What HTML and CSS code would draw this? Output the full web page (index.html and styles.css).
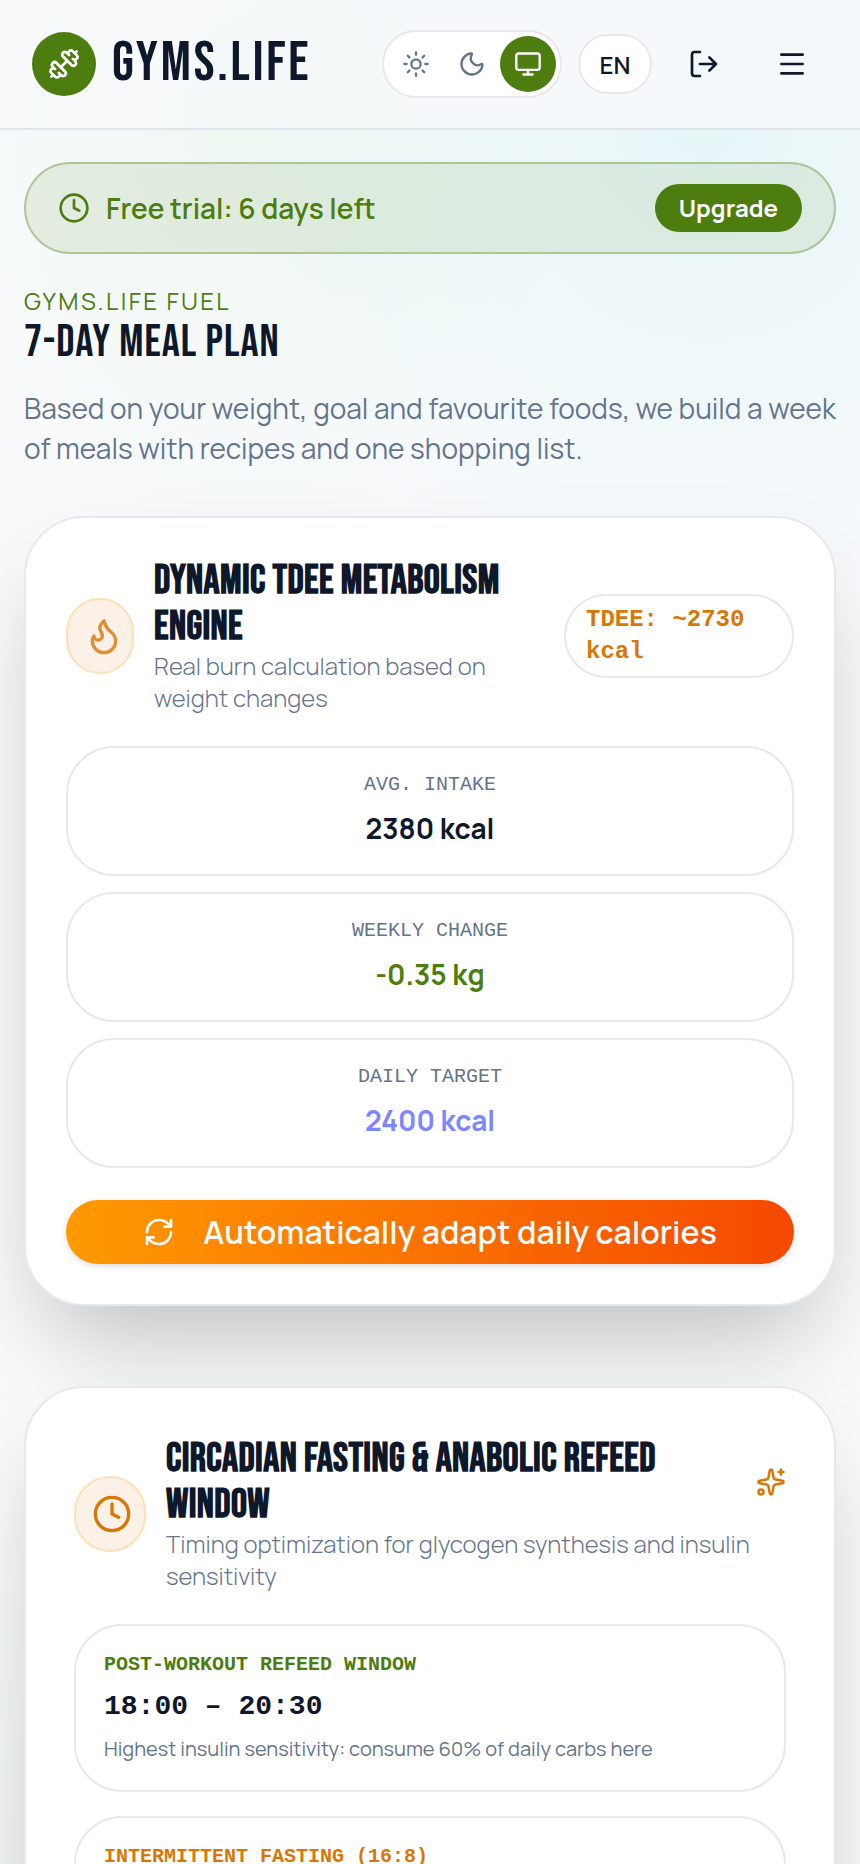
FILE: index.html
```html
<!DOCTYPE html>
<html lang="en">
<head>
    <meta charset="UTF-8">
    <meta name="viewport" content="width=device-width, initial-scale=1.0">
    <title>GYMS.LIFE - 7-day meal plan</title>
    <link rel="stylesheet" href="styles.css">
</head>
<body>
    <div class="app">
        <header class="topbar">
            <a class="brand" href="#">
                <span class="brand-mark">
                    <svg class="icon icon-md" viewBox="0 0 24 24" aria-hidden="true">
                        <path d="M17.596 12.768a2 2 0 1 0 2.829-2.829l-1.768-1.767a2 2 0 0 0 2.828-2.829l-2.828-2.828a2 2 0 0 0-2.829 2.828l-1.767-1.768a2 2 0 1 0-2.829 2.829z"/>
                        <path d="m2.5 21.5 1.4-1.4"/>
                        <path d="m20.1 3.9 1.4-1.4"/>
                        <path d="M5.343 21.485a2 2 0 1 0 2.829-2.828l1.767 1.768a2 2 0 1 0 2.829-2.829l-6.364-6.364a2 2 0 1 0-2.829 2.829l1.768 1.767a2 2 0 0 0-2.828 2.829z"/>
                        <path d="m9.6 14.4 4.8-4.8"/>
                    </svg>
                </span>
                <span class="brand-name">GYMS.LIFE</span>
            </a>

            <div class="actions">
                <div class="theme-switch">
                    <button type="button" aria-label="Light theme">
                        <svg class="icon icon-sm" viewBox="0 0 24 24">
                            <circle cx="12" cy="12" r="4"/>
                            <path d="M12 2v2M12 20v2M4.93 4.93l1.41 1.41M17.66 17.66l1.41 1.41M2 12h2M20 12h2M6.34 17.66l-1.41 1.41M19.07 4.93l-1.41 1.41"/>
                        </svg>
                    </button>
                    <button type="button" aria-label="Dark theme">
                        <svg class="icon icon-sm" viewBox="0 0 24 24">
                            <path d="M20.985 12.486a9 9 0 1 1-9.473-9.472c.405-.022.617.46.402.803a6 6 0 0 0 8.268 8.268c.344-.215.825-.004.803.401"/>
                        </svg>
                    </button>
                    <button type="button" class="active" aria-label="System theme">
                        <svg class="icon icon-sm" viewBox="0 0 24 24">
                            <rect width="20" height="14" x="2" y="3" rx="2"/>
                            <path d="M8 21h8M12 17v4"/>
                        </svg>
                    </button>
                </div>
                <button type="button" class="lang">EN</button>
                <button type="button" class="icon-button" aria-label="Log out">
                    <svg class="icon icon-md" viewBox="0 0 24 24">
                        <path d="m16 17 5-5-5-5M21 12H9M9 21H5a2 2 0 0 1-2-2V5a2 2 0 0 1 2-2h4"/>
                    </svg>
                </button>
                <button type="button" class="icon-button" aria-label="Menu">
                    <svg class="icon icon-md" viewBox="0 0 24 24">
                        <path d="M4 5h16M4 12h16M4 19h16"/>
                    </svg>
                </button>
            </div>
        </header>

        <main>
            <div class="trial">
                <svg class="icon icon-md" viewBox="0 0 24 24" aria-hidden="true">
                    <circle cx="12" cy="12" r="10"/>
                    <path d="M12 6v6l4 2"/>
                </svg>
                <span class="trial-text">Free trial: 6 days left</span>
                <a class="upgrade" href="#">Upgrade</a>
            </div>

            <section class="intro">
                <p class="eyebrow">GYMS.LIFE FUEL</p>
                <h1>7-DAY MEAL PLAN</h1>
                <p class="lead">Based on your weight, goal and favourite foods, we build a week of meals with recipes and one shopping list.</p>
            </section>

            <section class="card">
                <div class="card-head">
                    <span class="badge badge-flame">
                        <svg class="icon icon-lg" viewBox="0 0 24 24" aria-hidden="true">
                            <path d="M12 3q1 4 4 6.5t3 5.5a1 1 0 0 1-14 0 5 5 0 0 1 1-3 1 1 0 0 0 5 0c0-2-1.5-3-1.5-5q0-2 2.5-4"/>
                        </svg>
                    </span>
                    <div class="card-title">
                        <h2>DYNAMIC TDEE METABOLISM ENGINE</h2>
                        <p>Real burn calculation based on weight changes</p>
                    </div>
                    <span class="tdee">TDEE: ~2730 kcal</span>
                </div>

                <div class="stats">
                    <div class="stat">
                        <span class="stat-label">AVG. INTAKE</span>
                        <strong>2380 kcal</strong>
                    </div>
                    <div class="stat">
                        <span class="stat-label">WEEKLY CHANGE</span>
                        <strong class="green">-0.35 kg</strong>
                    </div>
                    <div class="stat">
                        <span class="stat-label">DAILY TARGET</span>
                        <strong class="indigo">2400 kcal</strong>
                    </div>
                </div>

                <button type="button" class="adapt">
                    <svg class="icon icon-md" viewBox="0 0 24 24" aria-hidden="true">
                        <path d="M3 12a9 9 0 0 1 9-9 9.75 9.75 0 0 1 6.74 2.74L21 8"/>
                        <path d="M21 3v5h-5"/>
                        <path d="M21 12a9 9 0 0 1-9 9 9.75 9.75 0 0 1-6.74-2.74L3 16"/>
                        <path d="M8 16H3v5"/>
                    </svg>
                    Automatically adapt daily calories
                </button>
            </section>

            <section class="card card-wide">
                <div class="card-head">
                    <span class="badge">
                        <svg class="icon icon-lg" viewBox="0 0 24 24" aria-hidden="true">
                            <circle cx="12" cy="12" r="10"/>
                            <path d="M12 6v6l4 2"/>
                        </svg>
                    </span>
                    <div class="card-title">
                        <h2>CIRCADIAN FASTING &amp; ANABOLIC REFEED WINDOW</h2>
                        <p>Timing optimization for glycogen synthesis and insulin sensitivity</p>
                    </div>
                    <svg class="icon sparkles" viewBox="0 0 24 24" aria-hidden="true">
                        <path d="M11.017 2.814a1 1 0 0 1 1.966 0l1.051 5.558a2 2 0 0 0 1.594 1.594l5.558 1.051a1 1 0 0 1 0 1.966l-5.558 1.051a2 2 0 0 0-1.594 1.594l-1.051 5.558a1 1 0 0 1-1.966 0l-1.051-5.558a2 2 0 0 0-1.594-1.594l-5.558-1.051a1 1 0 0 1 0-1.966l5.558-1.051a2 2 0 0 0 1.594-1.594z"/>
                        <path d="M20 2v4M22 4h-4"/>
                        <circle cx="4" cy="20" r="2"/>
                    </svg>
                </div>

                <div class="windows">
                    <div class="window">
                        <span class="window-label green">POST-WORKOUT REFEED WINDOW</span>
                        <strong>18:00 – 20:30</strong>
                        <p>Highest insulin sensitivity: consume 60% of daily carbs here</p>
                    </div>
                    <div class="window">
                        <span class="window-label amber">INTERMITTENT FASTING (16:8)</span>
                    </div>
                </div>
            </section>
        </main>
    </div>
</body>
</html>
```
FILE: styles.css
```css
* {
    box-sizing: border-box;
}
body {
    margin: 0;
    font-family: Manrope, Inter, sans-serif;
    color: #0f172a;
    background-color: #f8fafc;
}
h1, h2, p {
    margin: 0;
}
button {
    padding: 0;
    border: none;
    background: none;
    color: inherit;
    font: inherit;
    cursor: pointer;
}
a {
    color: inherit;
    text-decoration: none;
}
.app {
    height: 100vh;
    overflow-y: auto;
    scrollbar-width: none;
    background-image:
        radial-gradient(ellipse 480px 500px at 82% 120px, rgba(6, 182, 190, 0.07), transparent),
        radial-gradient(ellipse 320px 440px at 30% 110px, rgba(80, 200, 80, 0.06), transparent),
        radial-gradient(ellipse 400px 300px at 0 100%, rgba(77, 124, 15, 0.03), transparent);
}
.icon {
    flex: none;
    fill: none;
    stroke: currentColor;
    stroke-width: 2;
    stroke-linecap: round;
    stroke-linejoin: round;
}
.icon-sm {
    width: 28px;
    height: 28px;
}
.icon-md {
    width: 32px;
    height: 32px;
}
.icon-lg {
    width: 40px;
    height: 40px;
}
.green {
    color: #4d7c0f;
}
.amber {
    color: #d97706;
}
.indigo {
    color: #7c86ff;
}

/* top bar */
.topbar {
    display: flex;
    align-items: center;
    justify-content: space-between;
    height: 130px;
    padding: 0 32px;
    border-bottom: 2px solid #e0e5e9;
    background-color: rgba(248, 250, 252, 0.75);
}
.brand {
    display: flex;
    align-items: center;
    gap: 16px;
}
.brand-mark {
    display: flex;
    align-items: center;
    justify-content: center;
    width: 64px;
    height: 64px;
    border-radius: 50%;
    background-color: #4d7c0f;
    color: white;
}
.brand-name {
    font-family: "Bebas Neue", "Liberation Sans Narrow", sans-serif;
    font-size: 56px;
    letter-spacing: 0.05em;
    line-height: 64px;
}
.actions {
    display: flex;
    align-items: center;
    gap: 16px;
}
.theme-switch {
    display: flex;
    padding: 4px;
    border: 2px solid #e8e8ea;
    border-radius: 34px;
    background-color: white;
    color: #64748b;
}
.theme-switch button {
    display: flex;
    align-items: center;
    justify-content: center;
    width: 56px;
    height: 56px;
    border-radius: 50%;
}
.theme-switch .active {
    background-color: #4d7c0f;
    color: white;
}
.lang {
    width: 74px;
    height: 60px;
    border: 2px solid #e8e8ea;
    border-radius: 30px;
    background-color: white;
    font-size: 24px;
    font-weight: 600;
}
.icon-button {
    display: flex;
    align-items: center;
    justify-content: center;
    width: 72px;
    height: 72px;
}

main {
    padding: 32px 24px;
}
.trial {
    display: flex;
    align-items: center;
    gap: 16px;
    padding: 20px 32px;
    border: 2px solid rgba(77, 124, 15, 0.35);
    border-radius: 46px;
    background-color: rgba(77, 124, 15, 0.1);
    color: #4d7c0f;
}
.trial-text {
    flex: 1;
    font-size: 28px;
    font-weight: 600;
}
.upgrade {
    padding: 0 24px;
    border-radius: 24px;
    background-color: #4d7c0f;
    color: white;
    font-size: 24px;
    font-weight: bold;
    line-height: 48px;
}

.intro {
    padding: 32px 0 48px;
}
.eyebrow {
    color: #4d7c0f;
    font-size: 24px;
    letter-spacing: 0.1em;
    line-height: 30px;
}
h1 {
    font-family: "Bebas Neue", "Liberation Sans Narrow", sans-serif;
    font-size: 45px;
    font-weight: normal;
    letter-spacing: 1px;
    line-height: 54px;
}
.lead {
    margin-top: 18px;
    color: #64748b;
    font-size: 28px;
    line-height: 40px;
}

/* cards */
.card {
    padding: 40px;
    border: 2px solid #e8e8ea;
    border-radius: 60px;
    background-color: white;
    box-shadow: 0 50px 100px -24px rgba(0, 0, 0, 0.25);
}
.card + .card {
    margin-top: 80px;
}
.card-wide {
    padding: 48px;
}
.card-head {
    display: flex;
    align-items: center;
    margin-bottom: 32px;
}
.badge {
    display: flex;
    flex: none;
    align-items: center;
    width: 72px;
    height: 76px;
    padding: 16px;
    border: 2px solid #fde0b5;
    border-radius: 36px;
    background-color: #fbf1e7;
    color: #d97706;
}
.badge-flame {
    width: 68px;
}
.badge-flame .icon {
    opacity: 0.8;
}
.card-title {
    flex: 1;
    margin-left: 20px;
}
h2 {
    font-family: "Bebas Neue", "Liberation Sans Narrow", sans-serif;
    font-size: 40px;
    letter-spacing: 0.01em;
    line-height: 46px;
}
.card-title p {
    color: #64748b;
    font-size: 24px;
    font-weight: 300;
    line-height: 32px;
}
.tdee {
    width: 230px;
    margin-left: 20px;
    padding: 8px 20px;
    border: 2px solid #e8e8ea;
    border-radius: 42px;
    color: #d97706;
    font-family: "Liberation Mono", monospace;
    font-size: 24px;
    font-weight: bold;
    line-height: 32px;
}
.stats {
    display: grid;
    gap: 16px;
}
.stat {
    padding: 20px 20px 24px;
    border: 2px solid #e8e8ea;
    border-radius: 48px;
    text-align: center;
}
.stat-label {
    display: block;
    margin-bottom: 4px;
    color: #64748b;
    font-family: "Liberation Mono", monospace;
    font-size: 20px;
    line-height: 34px;
}
.stat strong {
    display: block;
    font-size: 28px;
    line-height: 44px;
}
.adapt {
    display: flex;
    align-items: center;
    justify-content: center;
    gap: 28px;
    width: 100%;
    height: 64px;
    margin-top: 32px;
    border-radius: 32px;
    background-image: linear-gradient(to right, #fe9a00, #f54900);
    box-shadow: 0 2px 6px rgba(0, 0, 0, 0.15);
    color: #f8fafc;
    font-size: 32px;
    font-weight: 600;
}

.sparkles {
    align-self: flex-start;
    width: 30px;
    height: 92px;
    color: #d97706;
}
.windows {
    display: grid;
    gap: 24px;
}
.window {
    min-height: 168px;
    padding: 20px 28px;
    border: 2px solid #e8e8ea;
    border-radius: 48px;
}
.window-label {
    display: block;
    font-family: "Liberation Mono", monospace;
    font-size: 20px;
    font-weight: bold;
    line-height: 38px;
}
.window strong {
    display: block;
    font-family: "Liberation Mono", monospace;
    font-size: 28px;
    line-height: 46px;
}
.window p {
    color: #64748b;
    font-size: 20px;
    line-height: 38px;
}
```
